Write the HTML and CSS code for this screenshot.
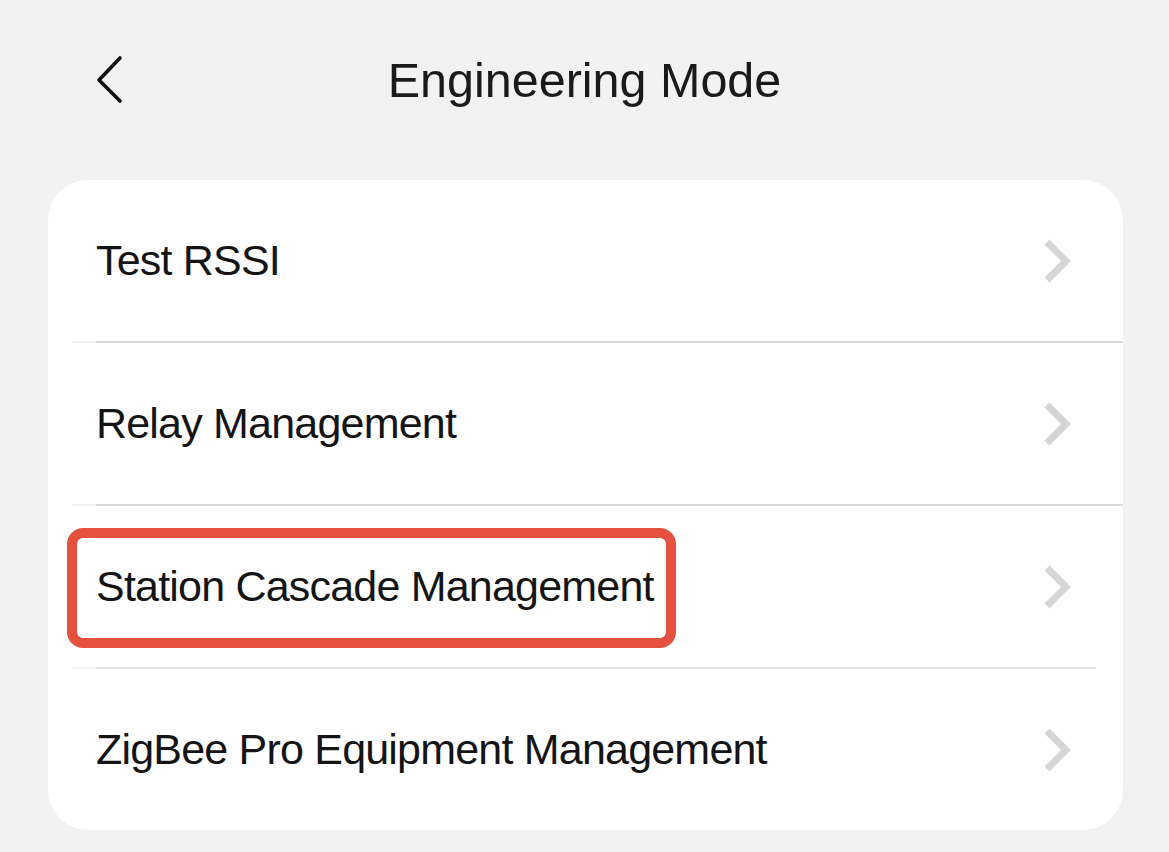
FILE: index.html
```html
<!DOCTYPE html>
<html lang="en">
<head>
<meta charset="utf-8">
<title>Engineering Mode</title>
<link rel="stylesheet" href="styles.css">
</head>
<body>
<div class="page">
  <header class="header">
    <div class="header-left">
      <svg class="back" width="28" height="50" viewBox="0 0 28 50" aria-hidden="true">
        <path d="M24 3 L3 25 L24 46" fill="none" stroke="#111" stroke-width="3.6" stroke-linecap="round" stroke-linejoin="round"/>
      </svg>
    </div>
    <h1 class="title">Engineering Mode</h1>
    <div class="header-right"></div>
  </header>

  <section class="card">
    <div class="row">
      <span class="label">Test RSSI</span>
      <svg class="chev" width="32" height="48" viewBox="0 0 32 48" aria-hidden="true"><path d="M6 5 L25 24 L6 43" fill="none" stroke="#d5d5d5" stroke-width="7"/></svg>
    </div>
    <div class="divider"></div>
    <div class="row">
      <span class="label">Relay Management</span>
      <svg class="chev" width="32" height="48" viewBox="0 0 32 48" aria-hidden="true"><path d="M6 5 L25 24 L6 43" fill="none" stroke="#d5d5d5" stroke-width="7"/></svg>
    </div>
    <div class="divider"></div>
    <div class="row">
      <span class="label">Station Cascade Management</span>
      <svg class="chev" width="32" height="48" viewBox="0 0 32 48" aria-hidden="true"><path d="M6 5 L25 24 L6 43" fill="none" stroke="#d5d5d5" stroke-width="7"/></svg>
      <div class="highlight"></div>
    </div>
    <div class="divider divider-short"></div>
    <div class="row">
      <span class="label">ZigBee Pro Equipment Management</span>
      <svg class="chev" width="32" height="48" viewBox="0 0 32 48" aria-hidden="true"><path d="M6 5 L25 24 L6 43" fill="none" stroke="#d5d5d5" stroke-width="7"/></svg>
    </div>
  </section>
</div>
</body>
</html>
```

FILE: styles.css
```css
* { box-sizing: border-box; }

html, body {
  margin: 0;
  padding: 0;
  background: #f2f2f2;
}

body {
  font-family: "Liberation Sans", Arial, Helvetica, sans-serif;
  color: #141414;
  width: 1169px;
  height: 852px;
  overflow: hidden;
}

.page {
  display: flex;
  flex-direction: column;
}

.header {
  height: 160px;
  display: grid;
  grid-template-columns: 1fr auto 1fr;
  align-items: center;
}

.header-left {
  padding-left: 96px;
  display: flex;
  align-items: center;
}

.back { display: block; }

.title {
  margin: 0;
  font-size: 48.5px;
  font-weight: 400;
  letter-spacing: 0;
  color: #1a1a1a;
  line-height: 1;
}

.card {
  margin: 20px 46px 0 48px;
  background: #ffffff;
  border-radius: 40px;
  display: flex;
  flex-direction: column;
  overflow: hidden;
}

.row {
  position: relative;
  height: 161px;
  display: flex;
  align-items: center;
  justify-content: space-between;
  padding: 0 50px 0 48px;
}

.label {
  font-size: 43px;
  letter-spacing: -0.8px;
  color: #141414;
  line-height: 1;
}

.chev { display: block; }

.divider {
  height: 2px;
  margin-left: 24px;
  background: linear-gradient(to right, #f1f1f1 0 24px, #dadada 24px);
}

.divider-short {
  margin-right: 27px;
  background: linear-gradient(to right, #f3f3f3 0 24px, #e6e6e6 24px);
}

.highlight {
  position: absolute;
  top: 22px;
  left: 19px;
  width: 609px;
  height: 120px;
  border: 10px solid #e6513f;
  border-radius: 16px;
  pointer-events: none;
}
```
